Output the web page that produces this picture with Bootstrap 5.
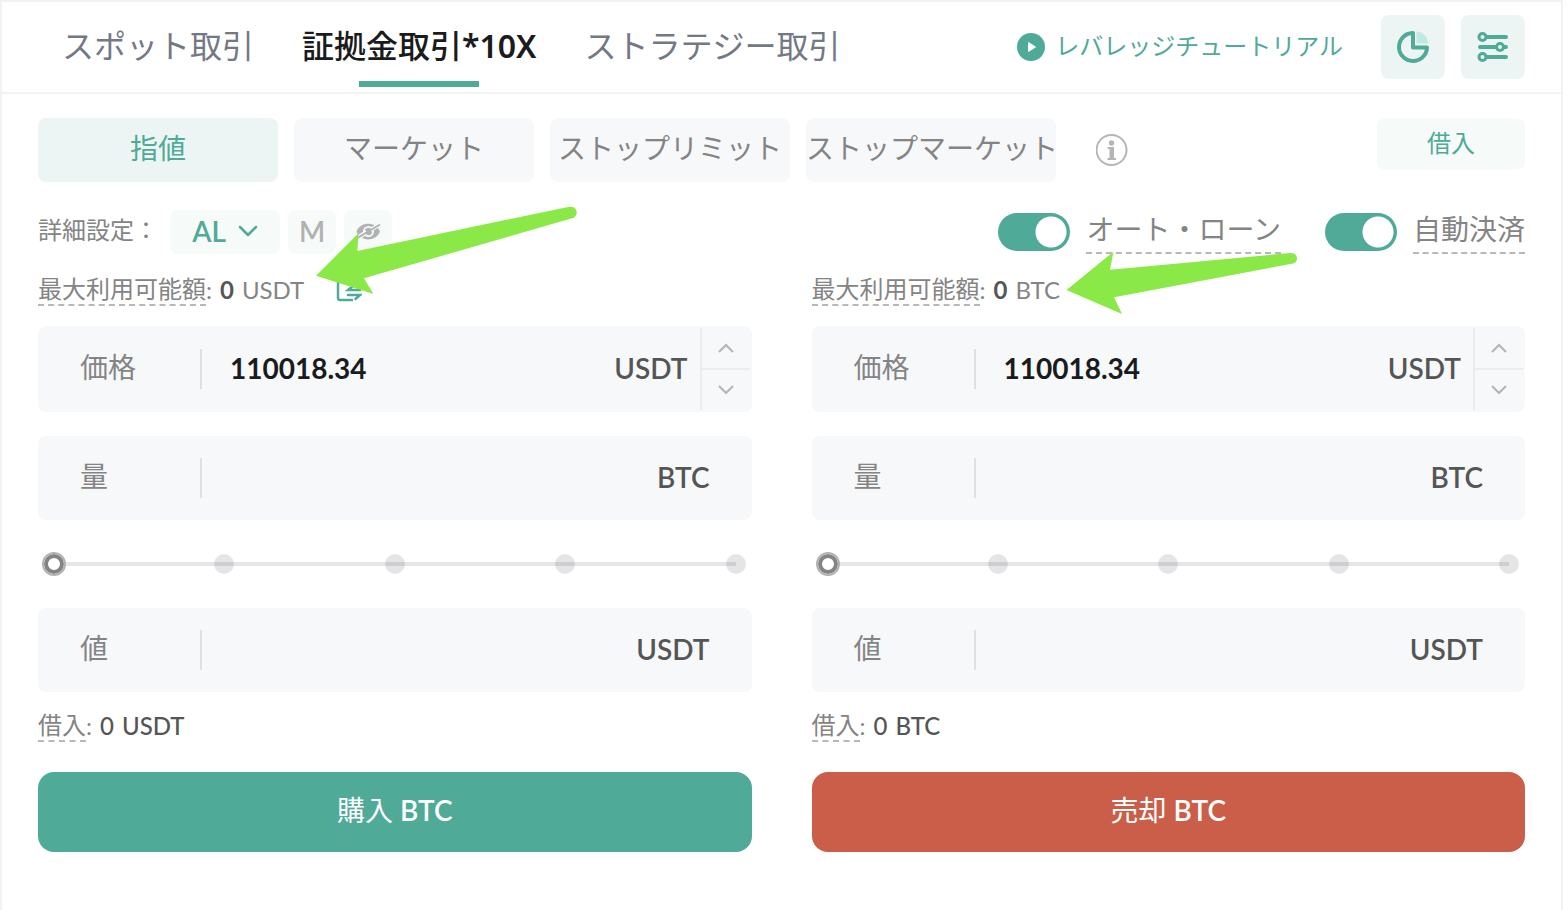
<!DOCTYPE html>
<html lang="ja">
<head>
<meta charset="utf-8">
<meta name="viewport" content="width=device-width, initial-scale=1">
<title>証拠金取引</title>
<link href="https://cdn.jsdelivr.net/npm/bootstrap@5.3.0/dist/css/bootstrap.min.css" rel="stylesheet">
<style>
:root{--teal:#50aa98;--teal-soft:#edf5f4;--teal-faint:#f6faf9;--field:#f7f8fa;--muted:#848484;--strong:#555;--line:#f2f2f2}
body{font-family:Lato,"Noto Sans CJK JP",sans-serif;font-size:24px;line-height:32px;color:var(--muted);background:#fff}
button{font-family:inherit}
svg{display:block;flex:none}
.panel{min-height:100vh;margin-right:5px;border:2px solid var(--line);border-bottom:0}
.topbar{height:92px;padding:0 36px 0 60px;border-bottom:2px solid var(--line)}
.topbar .nav{gap:48px}
.topbar .nav-link{position:relative;padding:0;height:90px;line-height:88px;font-size:32px;color:#737885;white-space:nowrap}
.topbar .nav-link.active{color:#1a1b1c;font-weight:500}
.topbar .nav-link.active b{font-family:"Noto Sans",sans-serif;font-weight:600}
.topbar .nav-link.active::after{content:"";position:absolute;left:50%;bottom:5px;width:120px;height:6px;margin-left:-60px;background:var(--teal)}
.guide{color:var(--teal);gap:10px;margin-right:38px;text-decoration:none;white-space:nowrap}
.guide span{padding-bottom:2px}
.tool{width:64px;height:64px;border:0;border-radius:8px;background:var(--teal-soft);padding:0}
.work{padding:24px 36px 0}
.kind{height:64px;min-width:240px;padding:0 0 4px;border:0;border-radius:8px;background:var(--field);color:var(--muted);font-size:28px;white-space:nowrap}
.kind.on{background:var(--teal-soft);color:var(--teal)}
.kind-wide{width:250px}
.kinds{gap:16px}
.info{border:0;padding:0;background:none;margin-left:24px}
.borrow{width:148px;height:52px;border:0;border-radius:8px;background:var(--teal-faint);color:var(--teal);font-size:24px;padding:0 0 2px}
.settings{height:44px;margin-top:28px}
.switches{gap:44px}
.chip{height:44px;border:0;border-radius:8px;background:var(--teal-faint);color:#b0b2b2;font-size:28px;font-weight:600;line-height:40px;padding:0 0 2px;min-width:48px}
.chip-mode{width:110px;color:var(--teal);gap:12px}
.hint{border-bottom:2px dashed #b8b8b8}
.switch-box{gap:16px}
.form-check-input.toggle{width:72px;height:38px;margin:0;border:0;border-radius:19px;cursor:pointer;background:var(--teal) radial-gradient(circle at 53px 19px,#fff 15px,transparent 16px);box-shadow:none}
.switch-box label{font-size:28px;line-height:38px;height:44px;white-space:nowrap}
.sides{--bs-gutter-x:60px}
.side{position:relative}
.avail{height:72px}
.avail .hint,.loan .hint{line-height:30px}
.avail b{color:var(--strong);margin:0 8px}
.swap{margin-left:32px}
.arrow{position:absolute;z-index:2;pointer-events:none}
.arrow-buy{left:278px;top:-48px}
.arrow-sell{left:254px;top:-3px}
.field{height:84px;border-radius:8px;background:var(--field)}
.field-price{height:86px;padding:2px 2px 2px 0}
.field label{width:162px;padding:0 0 4px 42px;font-size:28px}
.field input{min-width:0;height:40px;border:0;border-left:2px solid #dfe0e2;background:none;padding:0 0 2px 28px;font-size:28px;font-weight:700;color:#1a1b1c;outline:0}
.unit{font-size:28px;font-weight:600;color:var(--strong);margin-right:42px;padding-bottom:2px}
.field-price .unit{margin-right:12px}
.steps{width:50px;height:82px;border-left:2px solid #ebecee}
.steps button{border:0;background:none;padding:0}
.steps button:first-child{border-bottom:2px solid #ebecee}
.amount{position:relative;height:24px;margin:32px 4px}
.amount::before{content:"";position:absolute;left:12px;right:12px;top:10px;height:4px;background:#e5e6e9}
.stops{position:relative;height:24px;padding:0 2px}
.stops span{width:20px;height:20px;border-radius:50%;background:rgba(0,0,0,.1)}
.amount input{position:absolute;inset:0;width:100%;height:24px;margin:0;appearance:none;background:none}
.amount input::-webkit-slider-thumb{appearance:none;width:24px;height:24px;border-radius:50%;background:#fff;border:2px solid #b2b2b2;box-shadow:inset 0 0 0 4px #848484}
.loan{height:80px;padding-top:18px}
.loan .val{gap:8px;color:var(--strong);margin-left:8px;font-weight:500}
.deal{height:80px;border:0;border-radius:16px;color:#fff;font-size:28px;padding:0 0 4px}
.deal b{font-weight:600}
.deal-buy{background:var(--teal)}
.deal-sell{background:#ca5e49}
</style>
</head>
<body>
<main class="panel">
  <header class="topbar d-flex align-items-center justify-content-between">
    <nav class="nav flex-nowrap">
      <a class="nav-link" href="#spot">スポット取引</a>
      <a class="nav-link active" href="#margin" aria-current="page">証拠金取引<b>*10X</b></a>
      <a class="nav-link" href="#strategy">ストラテジー取引</a>
    </nav>
    <div class="d-flex align-items-center">
      <a class="guide d-flex align-items-center" href="#tutorial">
        <svg width="28" height="28" viewBox="0 0 28 28"><circle cx="14" cy="14" r="14" fill="#50aa98"/><path d="M11.500 9.500v9l7-4.500z" fill="#fff" stroke="#fff" stroke-linejoin="round"/></svg>
        <span>レバレッジチュートリアル</span>
      </a>
      <div class="d-flex gap-3">
        <button class="tool d-flex align-items-center justify-content-center" type="button" aria-label="資産">
          <svg width="34" height="34" viewBox="0 0 34 34" fill="none"><path d="M16.500 3A14 14 0 1 0 31 17.500H17V3z" stroke="#50aa98" stroke-width="4" stroke-linejoin="round"/><path d="M20.500 1.500A12 12 0 0 1 32 13.500H20.500z" fill="#c0e9e1"/></svg>
        </button>
        <button class="tool d-flex align-items-center justify-content-center" type="button" aria-label="設定">
          <svg width="32" height="32" viewBox="0 0 32 32" fill="none" stroke="#50aa98" stroke-linecap="round"><path d="M9 6h20M3 16h15M26 16h3M9 26h20" stroke-width="4"/><g stroke-width="3" fill="#edf5f4"><circle cx="5.500" cy="6" r="3.500"/><circle cx="23" cy="16" r="3.500"/><circle cx="5.500" cy="26" r="3.500"/></g></svg>
        </button>
      </div>
    </div>
  </header>

  <section class="work">
    <div class="d-flex justify-content-between align-items-start">
      <div class="kinds d-flex align-items-center">
        <button class="kind on" type="button">指値</button>
        <button class="kind" type="button">マーケット</button>
        <button class="kind" type="button">ストップリミット</button>
        <button class="kind kind-wide" type="button">ストップマーケット</button>
        <button class="info" type="button" aria-label="説明">
          <svg width="32" height="32" viewBox="0 0 32 32"><circle cx="15.500" cy="16" r="15" fill="none" stroke="#b5b5b5" stroke-width="2"/><circle cx="15.500" cy="9" r="2.700" fill="#b5b5b5"/><path d="M11.500 13H18v11h2v2h-8.500v-2h2v-9h-2z" fill="#b5b5b5"/></svg>
        </button>
      </div>
      <button class="borrow" type="button">借入</button>
    </div>

    <div class="settings d-flex justify-content-between align-items-center">
      <div class="d-flex align-items-center gap-2">
        <span class="me-1 pb-1">詳細設定：</span>
        <button class="chip chip-mode d-flex align-items-center justify-content-center" type="button">AL
          <svg width="20" height="14" viewBox="0 0 20 14" fill="none" stroke="#50aa98" stroke-width="2.500" stroke-linecap="round" stroke-linejoin="round"><path d="M2 3l8 8 8-8"/></svg>
        </button>
        <button class="chip" type="button">M</button>
        <button class="chip d-flex align-items-center justify-content-center" type="button" aria-label="非表示">
          <svg width="26" height="20" viewBox="0 0 26 20" fill="none"><path d="M1.500 10.500C5 0 21 0 25 10.500 21 21 5 21 1.500 10.500z" fill="#b0b2b2"/><circle cx="13.500" cy="10.500" r="4.600" stroke="#f6faf9" stroke-width="1.800"/><path d="M1 15.800L11 10M15.500 7.500L24 2.500M2.500 18.500L11.500 13M16 10L25.500 4.500" stroke="#f6faf9" stroke-width="1.500"/><path d="M1.500 17.500L25 3.500" stroke="#b0b2b2" stroke-width="1.800"/></svg>
        </button>
      </div>
      <div class="switches d-flex align-items-center">
        <div class="switch-box d-flex align-items-center">
          <input class="form-check-input toggle" type="checkbox" role="switch" id="autoLoan" checked>
          <label class="hint" for="autoLoan">オート・ローン</label>
        </div>
        <div class="switch-box d-flex align-items-center">
          <input class="form-check-input toggle" type="checkbox" role="switch" id="autoRepay" checked>
          <label class="hint" for="autoRepay">自動決済</label>
        </div>
      </div>
    </div>

    <div class="row sides">
      <div class="col-6">
        <form class="side">
          <svg class="arrow arrow-buy" width="262" height="90" viewBox="316 206 262 90"><path d="M316 275.700L358.500 233.300 357.300 251 568 207Q576 206 576.700 212 577 216.500 573 218L364 278.300 373.500 294z" fill="#8ae947"/></svg>
          <div class="avail d-flex align-items-center">
            <span class="hint">最大利用可能額</span><span>:</span><b>0</b><span>USDT</span>
            <svg class="swap" width="26" height="26" viewBox="0 0 26 26" fill="none" stroke="#50aa98" stroke-width="2.500" stroke-linecap="round"><path d="M14 1H4Q2 1 2 3v18q0 2 2 2h12M24 13H12l5-4M12 18h12l-4.500 4"/></svg>
          </div>
          <div class="field field-price d-flex align-items-center">
            <label for="buyPrice">価格</label>
            <input class="flex-grow-1" id="buyPrice" type="text" value="110018.34">
            <span class="unit">USDT</span>
            <div class="steps d-flex flex-column">
              <button class="flex-fill d-flex align-items-center justify-content-center" type="button" aria-label="上げる"><svg width="18" height="12" viewBox="0 0 18 12" fill="none" stroke="#b5b5b5" stroke-width="2"><path d="M2 10l7-7 7 7"/></svg></button>
              <button class="flex-fill d-flex align-items-center justify-content-center" type="button" aria-label="下げる"><svg width="18" height="12" viewBox="0 0 18 12" fill="none" stroke="#b5b5b5" stroke-width="2"><path d="M2 2l7 7 7-7"/></svg></button>
            </div>
          </div>
          <div class="field d-flex align-items-center mt-4">
            <label for="buyQty">量</label>
            <input class="flex-grow-1" id="buyQty" type="text">
            <span class="unit">BTC</span>
          </div>
          <div class="amount">
            <div class="stops d-flex align-items-center justify-content-between"><span></span><span></span><span></span><span></span><span></span></div>
            <input type="range" min="0" max="100" value="0" aria-label="購入の割合">
          </div>
          <div class="field d-flex align-items-center">
            <label for="buyTotal">値</label>
            <input class="flex-grow-1" id="buyTotal" type="text">
            <span class="unit">USDT</span>
          </div>
          <div class="loan d-flex align-items-start">
            <span class="hint">借入</span><span>:</span><span class="val d-flex"><span>0</span><span>USDT</span></span>
          </div>
          <button class="deal deal-buy w-100" type="button">購入 <b>BTC</b></button>
        </form>
      </div>

      <div class="col-6">
        <form class="side">
          <svg class="arrow arrow-sell" width="232" height="64" viewBox="1066 251 232 64"><path d="M1066.500 290L1113.500 251.700 1110 269.700 1290 253Q1296.500 252.700 1297 258 1297.300 262.500 1293 263.500L1114 297.300 1122 314z" fill="#8ae947"/></svg>
          <div class="avail d-flex align-items-center">
            <span class="hint">最大利用可能額</span><span>:</span><b>0</b><span>BTC</span>
          </div>
          <div class="field field-price d-flex align-items-center">
            <label for="sellPrice">価格</label>
            <input class="flex-grow-1" id="sellPrice" type="text" value="110018.34">
            <span class="unit">USDT</span>
            <div class="steps d-flex flex-column">
              <button class="flex-fill d-flex align-items-center justify-content-center" type="button" aria-label="上げる"><svg width="18" height="12" viewBox="0 0 18 12" fill="none" stroke="#b5b5b5" stroke-width="2"><path d="M2 10l7-7 7 7"/></svg></button>
              <button class="flex-fill d-flex align-items-center justify-content-center" type="button" aria-label="下げる"><svg width="18" height="12" viewBox="0 0 18 12" fill="none" stroke="#b5b5b5" stroke-width="2"><path d="M2 2l7 7 7-7"/></svg></button>
            </div>
          </div>
          <div class="field d-flex align-items-center mt-4">
            <label for="sellQty">量</label>
            <input class="flex-grow-1" id="sellQty" type="text">
            <span class="unit">BTC</span>
          </div>
          <div class="amount">
            <div class="stops d-flex align-items-center justify-content-between"><span></span><span></span><span></span><span></span><span></span></div>
            <input type="range" min="0" max="100" value="0" aria-label="売却の割合">
          </div>
          <div class="field d-flex align-items-center">
            <label for="sellTotal">値</label>
            <input class="flex-grow-1" id="sellTotal" type="text">
            <span class="unit">USDT</span>
          </div>
          <div class="loan d-flex align-items-start">
            <span class="hint">借入</span><span>:</span><span class="val d-flex"><span>0</span><span>BTC</span></span>
          </div>
          <button class="deal deal-sell w-100" type="button">売却 <b>BTC</b></button>
        </form>
      </div>
    </div>
  </section>
</main>
<script src="https://cdn.jsdelivr.net/npm/bootstrap@5.3.0/dist/js/bootstrap.bundle.min.js"></script>
</body>
</html>
